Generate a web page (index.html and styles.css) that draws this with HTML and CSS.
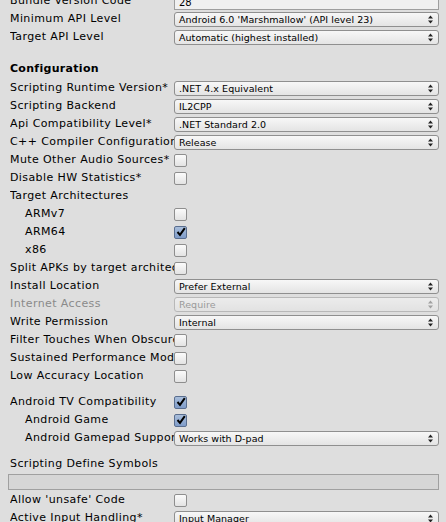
FILE: index.html
```html
<!DOCTYPE html>
<html>
<head>
<meta charset="utf-8">
<link rel="stylesheet" href="styles.css">
</head>
<body>
<div class="panel">
  <div class="row"><span class="label">Bundle Version Code</span><div class="field">28</div></div>
  <div class="row"><span class="label">Minimum API Level</span><div class="dd"><span class="dd-text">Android 6.0 'Marshmallow' (API level 23)</span><svg class="arr" viewBox="0 0 5 9" width="5" height="9"><path d="M2.5 0.5 L5 3.5 L0 3.5 Z M2.5 8.5 L5 5.5 L0 5.5 Z"/></svg></div></div>
  <div class="row"><span class="label">Target API Level</span><div class="dd"><span class="dd-text">Automatic (highest installed)</span><svg class="arr" viewBox="0 0 5 9" width="5" height="9"><path d="M2.5 0.5 L5 3.5 L0 3.5 Z M2.5 8.5 L5 5.5 L0 5.5 Z"/></svg></div></div>

  <div class="header">Configuration</div>

  <div class="row"><span class="label">Scripting Runtime Version*</span><div class="dd"><span class="dd-text">.NET 4.x Equivalent</span><svg class="arr" viewBox="0 0 5 9" width="5" height="9"><path d="M2.5 0.5 L5 3.5 L0 3.5 Z M2.5 8.5 L5 5.5 L0 5.5 Z"/></svg></div></div>
  <div class="row"><span class="label">Scripting Backend</span><div class="dd"><span class="dd-text">IL2CPP</span><svg class="arr" viewBox="0 0 5 9" width="5" height="9"><path d="M2.5 0.5 L5 3.5 L0 3.5 Z M2.5 8.5 L5 5.5 L0 5.5 Z"/></svg></div></div>
  <div class="row"><span class="label">Api Compatibility Level*</span><div class="dd"><span class="dd-text">.NET Standard 2.0</span><svg class="arr" viewBox="0 0 5 9" width="5" height="9"><path d="M2.5 0.5 L5 3.5 L0 3.5 Z M2.5 8.5 L5 5.5 L0 5.5 Z"/></svg></div></div>
  <div class="row"><span class="label">C++ Compiler Configuration</span><div class="dd"><span class="dd-text">Release</span><svg class="arr" viewBox="0 0 5 9" width="5" height="9"><path d="M2.5 0.5 L5 3.5 L0 3.5 Z M2.5 8.5 L5 5.5 L0 5.5 Z"/></svg></div></div>
  <div class="row"><span class="label">Mute Other Audio Sources*</span><div class="cb"></div></div>
  <div class="row"><span class="label">Disable HW Statistics*</span><div class="cb"></div></div>
  <div class="row"><span class="label">Target Architectures</span></div>
  <div class="row"><span class="label sub">ARMv7</span><div class="cb"></div></div>
  <div class="row"><span class="label sub">ARM64</span><div class="cb on"><svg viewBox="0 0 10 10" width="10" height="10"><path d="M1.5 5 L4 7.8 L8.8 1.2" fill="none" stroke="#000" stroke-width="2"/></svg></div></div>
  <div class="row"><span class="label sub">x86</span><div class="cb"></div></div>
  <div class="row"><span class="label">Split APKs by target architecture</span><div class="cb"></div></div>
  <div class="row"><span class="label">Install Location</span><div class="dd"><span class="dd-text">Prefer External</span><svg class="arr" viewBox="0 0 5 9" width="5" height="9"><path d="M2.5 0.5 L5 3.5 L0 3.5 Z M2.5 8.5 L5 5.5 L0 5.5 Z"/></svg></div></div>
  <div class="row disabled"><span class="label">Internet Access</span><div class="dd"><span class="dd-text">Require</span><svg class="arr" viewBox="0 0 5 9" width="5" height="9"><path d="M2.5 0.5 L5 3.5 L0 3.5 Z M2.5 8.5 L5 5.5 L0 5.5 Z"/></svg></div></div>
  <div class="row"><span class="label">Write Permission</span><div class="dd"><span class="dd-text">Internal</span><svg class="arr" viewBox="0 0 5 9" width="5" height="9"><path d="M2.5 0.5 L5 3.5 L0 3.5 Z M2.5 8.5 L5 5.5 L0 5.5 Z"/></svg></div></div>
  <div class="row"><span class="label">Filter Touches When Obscured</span><div class="cb"></div></div>
  <div class="row"><span class="label">Sustained Performance Mode</span><div class="cb"></div></div>
  <div class="row"><span class="label">Low Accuracy Location</span><div class="cb"></div></div>

  <div class="group">
    <div class="row"><span class="label">Android TV Compatibility</span><div class="cb on"><svg viewBox="0 0 10 10" width="10" height="10"><path d="M1.5 5 L4 7.8 L8.8 1.2" fill="none" stroke="#000" stroke-width="2"/></svg></div></div>
    <div class="row"><span class="label sub">Android Game</span><div class="cb on"><svg viewBox="0 0 10 10" width="10" height="10"><path d="M1.5 5 L4 7.8 L8.8 1.2" fill="none" stroke="#000" stroke-width="2"/></svg></div></div>
    <div class="row"><span class="label sub">Android Gamepad Support Level</span><div class="dd"><span class="dd-text">Works with D-pad</span><svg class="arr" viewBox="0 0 5 9" width="5" height="9"><path d="M2.5 0.5 L5 3.5 L0 3.5 Z M2.5 8.5 L5 5.5 L0 5.5 Z"/></svg></div></div>
  </div>

  <div class="group">
    <div class="row"><span class="label">Scripting Define Symbols</span></div>
    <div class="wide-row"><div class="wide-field"></div></div>
    <div class="row"><span class="label">Allow 'unsafe' Code</span><div class="cb"></div></div>
    <div class="row"><span class="label">Active Input Handling*</span><div class="dd"><span class="dd-text">Input Manager</span><svg class="arr" viewBox="0 0 5 9" width="5" height="9"><path d="M2.5 0.5 L5 3.5 L0 3.5 Z M2.5 8.5 L5 5.5 L0 5.5 Z"/></svg></div></div>
  </div>
</div>
</body>
</html>
```
FILE: styles.css
```css
html, body {
  margin: 0;
  padding: 0;
  background: #dedede;
  overflow: hidden;
}
.panel {
  margin-top: -8px;
  font-family: "DejaVu Sans", Verdana, sans-serif;
  font-size: 11px;
  color: #000;
}
.row {
  display: flex;
  align-items: center;
  height: 18px;
  padding-left: 10px;
  padding-right: 7px;
}
.label {
  width: 164px;
  flex: 0 0 164px;
  white-space: nowrap;
  overflow: hidden;
  line-height: 18px;
  letter-spacing: 0.4px;
}
.label.sub {
  padding-left: 15px;
  box-sizing: border-box;
}
.disabled .label { color: #8a8a8a; }
.header {
  font-weight: bold;
  height: 20px;
  line-height: 20px;
  padding-left: 10px;
  margin-top: 13px;
  letter-spacing: 0.3px;
}
.field {
  flex: 1;
  height: 13px;
  margin-top: 2px;
  border: 1px solid #9e9e9e;
  background: #f0f0f0;
  font-size: 10px;
  line-height: 13px;
  padding-left: 4px;
  box-sizing: content-box;
}
.dd {
  flex: 1;
  height: 13px;
  display: flex;
  align-items: center;
  justify-content: space-between;
  border: 1px solid #8f8f8f;
  border-radius: 3px;
  background: linear-gradient(#f7f7f7, #e4e4e4);
  padding: 0 5px 0 4px;
  font-size: 9.5px;
  letter-spacing: 0.05px;
}
.dd-text { white-space: nowrap; }
.arr { fill: #222; flex: 0 0 auto; }
.disabled .dd {
  border-color: #b8b8b8;
  color: #9a9a9a;
  background: linear-gradient(#ececec, #e2e2e2);
}
.disabled .arr { fill: #a0a0a0; }
.cb {
  width: 11px;
  height: 11px;
  border: 1px solid #8e8e8e;
  border-radius: 2px;
  background: linear-gradient(#fbfbfb, #e3e3e3);
  display: flex;
  align-items: center;
  justify-content: center;
}
.cb.on {
  background: linear-gradient(#a9bedb, #7f9cc9);
  border-color: #5a6e8f;
}
.group { margin-top: 8px; }
.wide-row {
  height: 18px;
  display: flex;
  align-items: center;
  padding-left: 8px;
  padding-right: 7px;
}
.wide-field {
  flex: 1;
  height: 14px;
  border: 1px solid #a0a0a0;
  background: #d6d6d6;
}
```
